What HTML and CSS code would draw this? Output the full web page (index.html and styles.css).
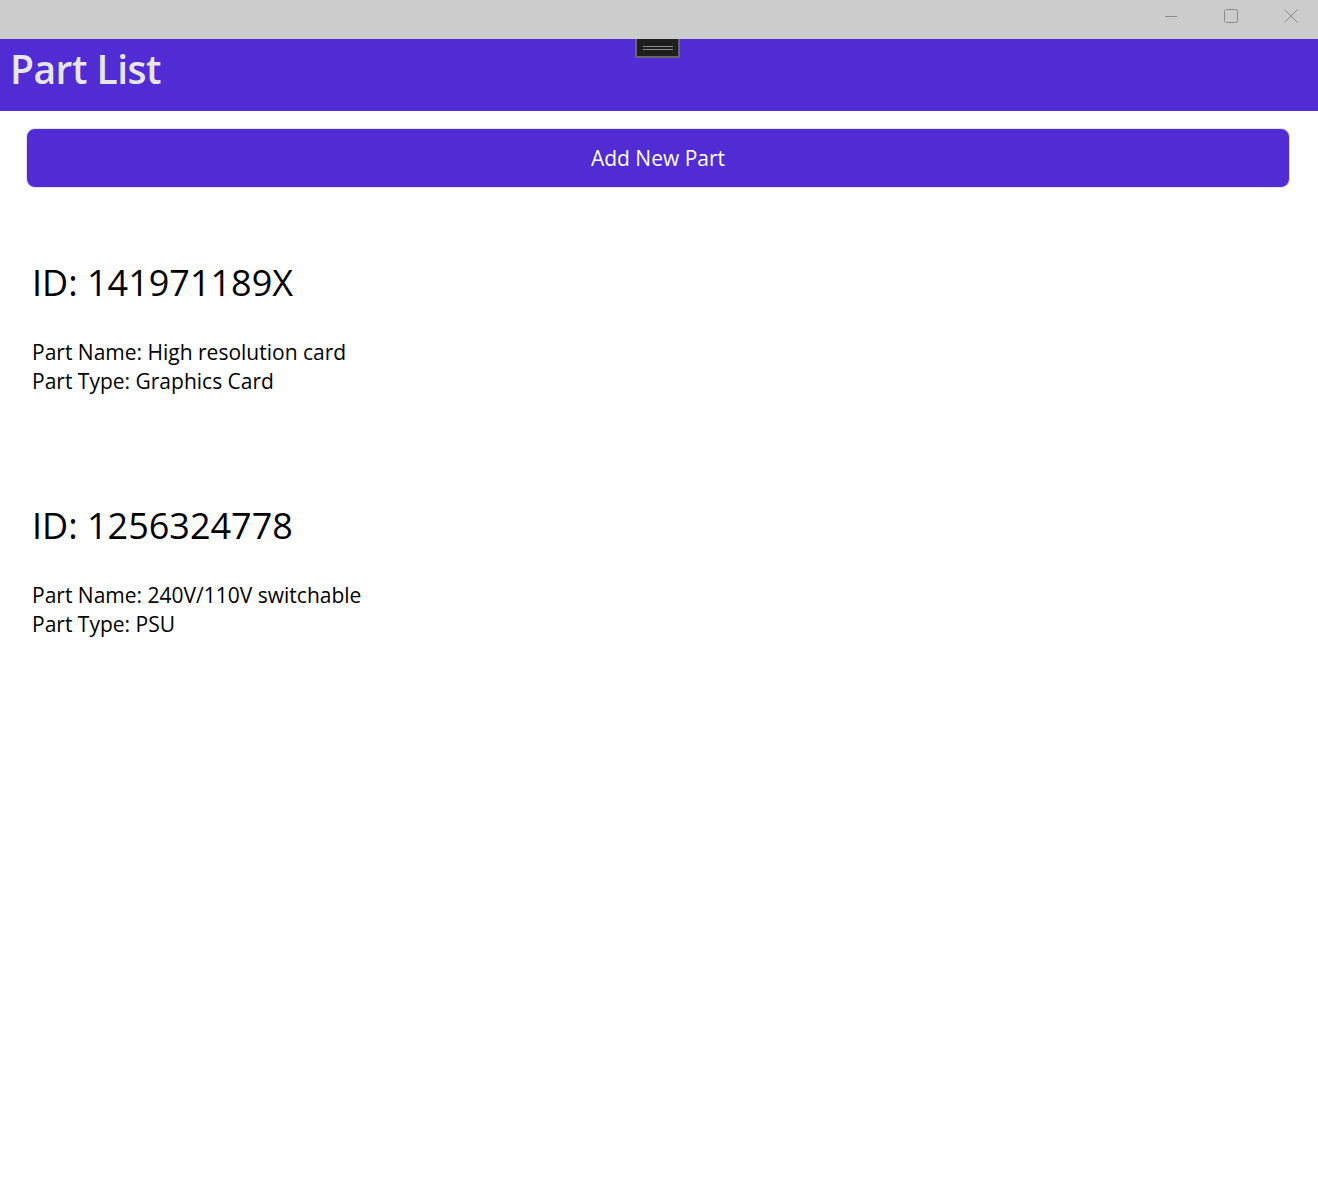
FILE: index.html
```html
<!DOCTYPE html>
<html lang="en">
<head>
<meta charset="utf-8">
<title>Part List</title>
<link rel="stylesheet" href="styles.css">
</head>
<body>
<div class="titlebar">
  <div class="caption-btn">
    <svg width="14" height="14" viewBox="0 0 14 14"><path d="M1 7.5H13" stroke="#8a8a8a" stroke-width="1" fill="none"/></svg>
  </div>
  <div class="caption-btn">
    <svg width="14" height="14" viewBox="0 0 14 14"><rect x="0.5" y="0.5" width="13" height="13" rx="2" stroke="#8a8a8a" stroke-width="1" fill="none"/></svg>
  </div>
  <div class="caption-btn">
    <svg width="14" height="14" viewBox="0 0 14 14"><path d="M0.5 0.5L13.5 13.5M13.5 0.5L0.5 13.5" stroke="#8a8a8a" stroke-width="1" fill="none"/></svg>
  </div>
</div>
<header class="appbar">
  <h1 class="appbar-title">Part List</h1>
  <div class="debug-toolbar"><span class="debug-line"></span><span class="debug-line"></span></div>
</header>
<main class="content">
  <button class="add-btn" type="button">Add New Part</button>
  <div class="part-list">
    <section class="part">
      <h2 class="part-id">ID: 141971189X</h2>
      <p class="part-info">Part Name: High resolution card<br>Part Type: Graphics Card</p>
    </section>
    <section class="part">
      <h2 class="part-id">ID: 1256324778</h2>
      <p class="part-info">Part Name: 240V/110V switchable<br>Part Type: PSU</p>
    </section>
  </div>
</main>
</body>
</html>
```
FILE: styles.css
```css
html, body {
  margin: 0;
  padding: 0;
  background: #ffffff;
  font-family: "Open Sans", "Noto Sans", sans-serif;
  color: #000000;
}

.titlebar {
  height: 39px;
  background: #cccccc;
  display: flex;
  justify-content: flex-end;
  align-items: flex-start;
  gap: 6px;
  padding-right: 0;
  box-sizing: border-box;
}

.caption-btn {
  width: 54px;
  height: 32px;
  display: flex;
  align-items: center;
  justify-content: center;
}

.caption-btn svg { display: block; }

.appbar {
  position: relative;
  height: 72px;
  background: #512bd4;
  display: flex;
  align-items: center;
  padding-left: 10px;
}

.appbar-title {
  margin: 0;
  font-size: 39px;
  font-weight: 600;
  color: #e6e6e6;
  line-height: 1;
  letter-spacing: -0.5px;
  position: relative;
  top: -7px;
}

.debug-toolbar {
  position: absolute;
  left: 635px;
  top: 0;
  width: 41px;
  height: 17px;
  background: #1e1e1e;
  border: 2px solid #666666;
  border-top: 0;
  display: flex;
  flex-direction: column;
  justify-content: center;
  align-items: center;
  gap: 2px;
}

.debug-line {
  width: 30px;
  height: 1px;
  background: #8a8a8a;
}

.content {
  padding: 17px 28px 0 26px;
}

.add-btn {
  display: block;
  width: 100%;
  height: 60px;
  background: #512bd4;
  color: #ffffff;
  border: 1px solid #e2e2e2;
  border-radius: 9px;
  font-family: "Open Sans", "Noto Sans", sans-serif;
  font-size: 21px;
  padding: 0;
  cursor: pointer;
}

.part-list {
  display: flex;
  flex-direction: column;
  gap: 105px;
  padding-top: 70px;
  padding-left: 6px;
}

.part-id {
  margin: 0;
  font-size: 36px;
  font-weight: 400;
  line-height: 49px;
}

.part-info {
  margin: 31px 0 0 0;
  font-size: 21px;
  line-height: 29px;
}
```
